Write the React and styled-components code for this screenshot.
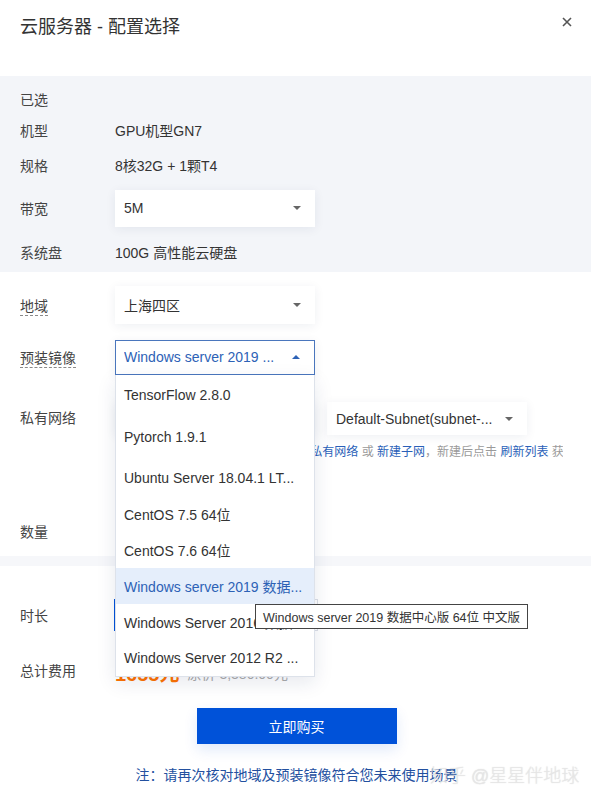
import React from 'react';
import styled, { createGlobalStyle } from 'styled-components';

const GlobalStyle = createGlobalStyle`
  html, body {
    margin: 0;
    padding: 0;
    background: #fff;
  }
  body {
    font-family: "Liberation Sans", "Noto Sans CJK SC", sans-serif;
    color: #333;
  }
`;

const images = [
  { text: 'TensorFlow 2.8.0', h: 40 },
  { text: 'Pytorch 1.9.1', h: 45 },
  { text: 'Ubuntu Server 18.04.1 LT...', h: 36 },
  { text: 'CentOS 7.5 64位', h: 36 },
  { text: 'CentOS 7.6 64位', h: 36 },
  { text: 'Windows server 2019 数据...', h: 36, active: true },
  { text: 'Windows Server 2016 数据...', h: 36 },
  { text: 'Windows Server 2012 R2 ...', h: 36 },
];

export default function App() {
  return (
    <Dialog>
      <GlobalStyle />
      <Header>
        <Title>云服务器 - 配置选择</Title>
        <Close>
          <svg width="10" height="10" viewBox="0 0 10 10">
            <path d="M1 1L9 9M9 1L1 9" stroke="#555" strokeWidth="1.6" />
          </svg>
        </Close>
      </Header>

      <GraySection>
        <Row $h={26}>
          <Label>已选</Label>
        </Row>
        <Row $h={36}>
          <Label>机型</Label>
          <Value>GPU机型GN7</Value>
        </Row>
        <Row $h={34}>
          <Label>规格</Label>
          <Value>8核32G + 1颗T4</Value>
        </Row>
        <Row $h={52}>
          <Label>带宽</Label>
          <Select $h={37}>
            <SelectText>5M</SelectText>
            <Arrow />
          </Select>
        </Row>
        <Row $h={36}>
          <Label>系统盘</Label>
          <Value>100G 高性能云硬盘</Value>
        </Row>
      </GraySection>

      <WhiteSection>
        <Row $h={42}>
          <Label>
            <Dashed>地域</Dashed>
          </Label>
          <Select $h={38}>
            <SelectText>上海四区</SelectText>
            <Arrow />
          </Select>
        </Row>
        <Row $h={62}>
          <Label>
            <Dashed>预装镜像</Dashed>
          </Label>
          <SelectWrap>
            <Select $h={35} $open>
              <SelectText $open>Windows server 2019 ...</SelectText>
              <Arrow $up />
            </Select>
            <Dropdown>
              {images.map((item) => (
                <Option key={item.text} $h={item.h} $active={item.active}>
                  {item.text}
                </Option>
              ))}
            </Dropdown>
          </SelectWrap>
        </Row>
        <NetBlock>
          <Label $lh={33}>私有网络</Label>
          <NetColumn>
            <SelectPair>
              {/* vpc select sits under the open dropdown */}
              <Select $h={33}>
                <span />
                <Arrow />
              </Select>
              <Select $h={33}>
                <SelectText>Default-Subnet(subnet-...</SelectText>
                <Arrow />
              </Select>
            </SelectPair>
            <Hint>
              如现有网络不合适，您可以前往新建 <HintLink>私有网络</HintLink> 或{' '}
              <HintLink>新建子网</HintLink>，新建后点击 <HintLink>刷新列表</HintLink> 获取
            </Hint>
          </NetColumn>
        </NetBlock>
        <Row $h={36} $mt={52}>
          <Label>数量</Label>
          <Stepper>
            <StepBtn />
            <StepValue />
            <StepBtn />
          </Stepper>
        </Row>
      </WhiteSection>

      <Strip />

      <BottomSection>
        <Row $h={36}>
          <Label>时长</Label>
          <Segments>
            <Segment $active />
            <Segment />
            <Segment />
          </Segments>
        </Row>
        <Row $h={36} $mt={19}>
          <Label>总计费用</Label>
          <Price>1655元</Price>
          <OldPrice>原价 3,380.00元</OldPrice>
        </Row>
        <BuyButton>立即购买</BuyButton>
        <Note>注：请再次核对地域及预装镜像符合您未来使用场景</Note>
      </BottomSection>

      <Tooltip>Windows server 2019 数据中心版 64位 中文版</Tooltip>
      <Watermark>知乎 @星星伴地球</Watermark>
    </Dialog>
  );
}

const Dialog = styled.div`
  position: relative;
  width: 591px;
  height: 794px;
  overflow: hidden;
  background: #fff;
`;

const Header = styled.div`
  height: 76px;
  box-sizing: border-box;
  padding: 14px 20px 0 20px;
  display: flex;
  justify-content: space-between;
  align-items: flex-start;
`;

const Title = styled.div`
  font-size: 18px;
  line-height: 26px;
  color: #333;
`;

const Close = styled.div`
  display: flex;
  margin-top: 3px;
  margin-right: -1px;
`;

const GraySection = styled.div`
  background: #f3f5f9;
  padding: 10px 0 2px 0;
`;

const WhiteSection = styled.div`
  background: #fff;
  padding: 12px 0 7px 0;
`;

const Strip = styled.div`
  height: 10px;
  background: #f6f7fa;
`;

const BottomSection = styled.div`
  background: #fff;
  padding-top: 31px;
  display: flex;
  flex-direction: column;
`;

const Row = styled.div`
  display: flex;
  align-items: center;
  height: ${(p) => p.$h}px;
  margin-top: ${(p) => p.$mt || 0}px;
`;

const Label = styled.div`
  width: 115px;
  flex-shrink: 0;
  box-sizing: border-box;
  padding-left: 20px;
  font-size: 14px;
  color: #444;
  line-height: ${(p) => (p.$lh ? `${p.$lh}px` : 'normal')};
`;

const Dashed = styled.span`
  border-bottom: 1px dashed #8a8a8a;
  padding-bottom: 1px;
`;

const Value = styled.div`
  font-size: 14px;
  color: #333;
`;

const SelectWrap = styled.div`
  position: relative;
`;

const Select = styled.div`
  width: 200px;
  height: ${(p) => p.$h}px;
  box-sizing: border-box;
  display: flex;
  align-items: center;
  justify-content: space-between;
  padding: 0 14px 0 9px;
  background: #fff;
  border: ${(p) => (p.$open ? '1px solid #4a76bd' : 'none')};
  padding-left: ${(p) => (p.$open ? 8 : 9)}px;
  box-shadow: 0 2px 10px rgba(20, 40, 90, 0.07);
`;

const SelectText = styled.span`
  font-size: 14px;
  color: ${(p) => (p.$open ? '#2d62b6' : '#333')};
  white-space: nowrap;
  overflow: hidden;
`;

const Arrow = styled.span`
  width: 0;
  height: 0;
  border-left: 4px solid transparent;
  border-right: 4px solid transparent;
  ${(p) =>
    p.$up
      ? 'border-bottom: 4px solid #2d62b6;'
      : 'border-top: 4px solid #666;'}
`;

const Dropdown = styled.div`
  position: absolute;
  top: 100%;
  left: 0;
  width: 200px;
  box-sizing: border-box;
  background: #fff;
  border: 1px solid #dde2ea;
  border-top: none;
  box-shadow: 0 6px 18px rgba(20, 40, 90, 0.1);
  z-index: 5;
`;

const Option = styled.div`
  height: ${(p) => p.$h}px;
  display: flex;
  align-items: center;
  padding-left: 8px;
  font-size: 14px;
  white-space: nowrap;
  color: ${(p) => (p.$active ? '#2d62b6' : '#333')};
  background: ${(p) => (p.$active ? '#e5eefb' : '#fff')};
`;

const NetBlock = styled.div`
  display: flex;
  align-items: flex-start;
  padding-top: 14px;
`;

const NetColumn = styled.div`
  display: flex;
  flex-direction: column;
`;

const SelectPair = styled.div`
  display: flex;
  gap: 12px;
`;

const Hint = styled.div`
  margin-top: 8px;
  width: 448px;
  overflow: hidden;
  white-space: nowrap;
  font-size: 12px;
  line-height: 18px;
  color: #9a9a9a;
`;

const HintLink = styled.span`
  color: #2a5fb8;
`;

const Stepper = styled.div`
  display: flex;
  height: 30px;
  border: 1px solid #dcdfe6;
`;

const StepBtn = styled.div`
  width: 30px;
`;

const StepValue = styled.div`
  width: 60px;
  border-left: 1px solid #dcdfe6;
  border-right: 1px solid #dcdfe6;
`;

const Segments = styled.div`
  display: flex;
  margin-left: -1px;
  height: 32px;
`;

const Segment = styled.div`
  width: 66px;
  border: 1px solid ${(p) => (p.$active ? '#0052d9' : '#dcdfe6')};
`;

const Price = styled.span`
  font-size: 20px;
  font-weight: bold;
  color: #ff7200;
  margin-top: 5px;
`;

const OldPrice = styled.span`
  margin-left: 8px;
  margin-top: 5px;
  font-size: 14px;
  color: #aaa;
`;

const BuyButton = styled.div`
  align-self: center;
  margin-top: 20px;
  margin-left: 2px;
  width: 200px;
  height: 36px;
  display: flex;
  align-items: center;
  justify-content: center;
  background: #0052d9;
  color: #fff;
  font-size: 14px;
  box-shadow: 0 6px 14px rgba(0, 82, 217, 0.12);
`;

const Note = styled.div`
  margin-top: 21px;
  text-align: center;
  font-size: 14px;
  line-height: 20px;
  color: #23509f;
  padding-left: 2px;
`;

const Tooltip = styled.div`
  position: absolute;
  left: 255px;
  top: 604px;
  height: 25px;
  box-sizing: border-box;
  padding: 0 7px;
  display: flex;
  align-items: center;
  background: #fff;
  border: 1px solid #444;
  font-size: 12.5px;
  color: #333;
  white-space: nowrap;
  z-index: 10;
`;

const Watermark = styled.div`
  position: absolute;
  left: 430px;
  top: 761px;
  font-size: 18px;
  font-weight: 300;
  color: rgba(232, 232, 232, 0.8);
  text-shadow: 0 0 1px rgba(170, 170, 170, 0.45);
  white-space: nowrap;
  z-index: 20;
`;
